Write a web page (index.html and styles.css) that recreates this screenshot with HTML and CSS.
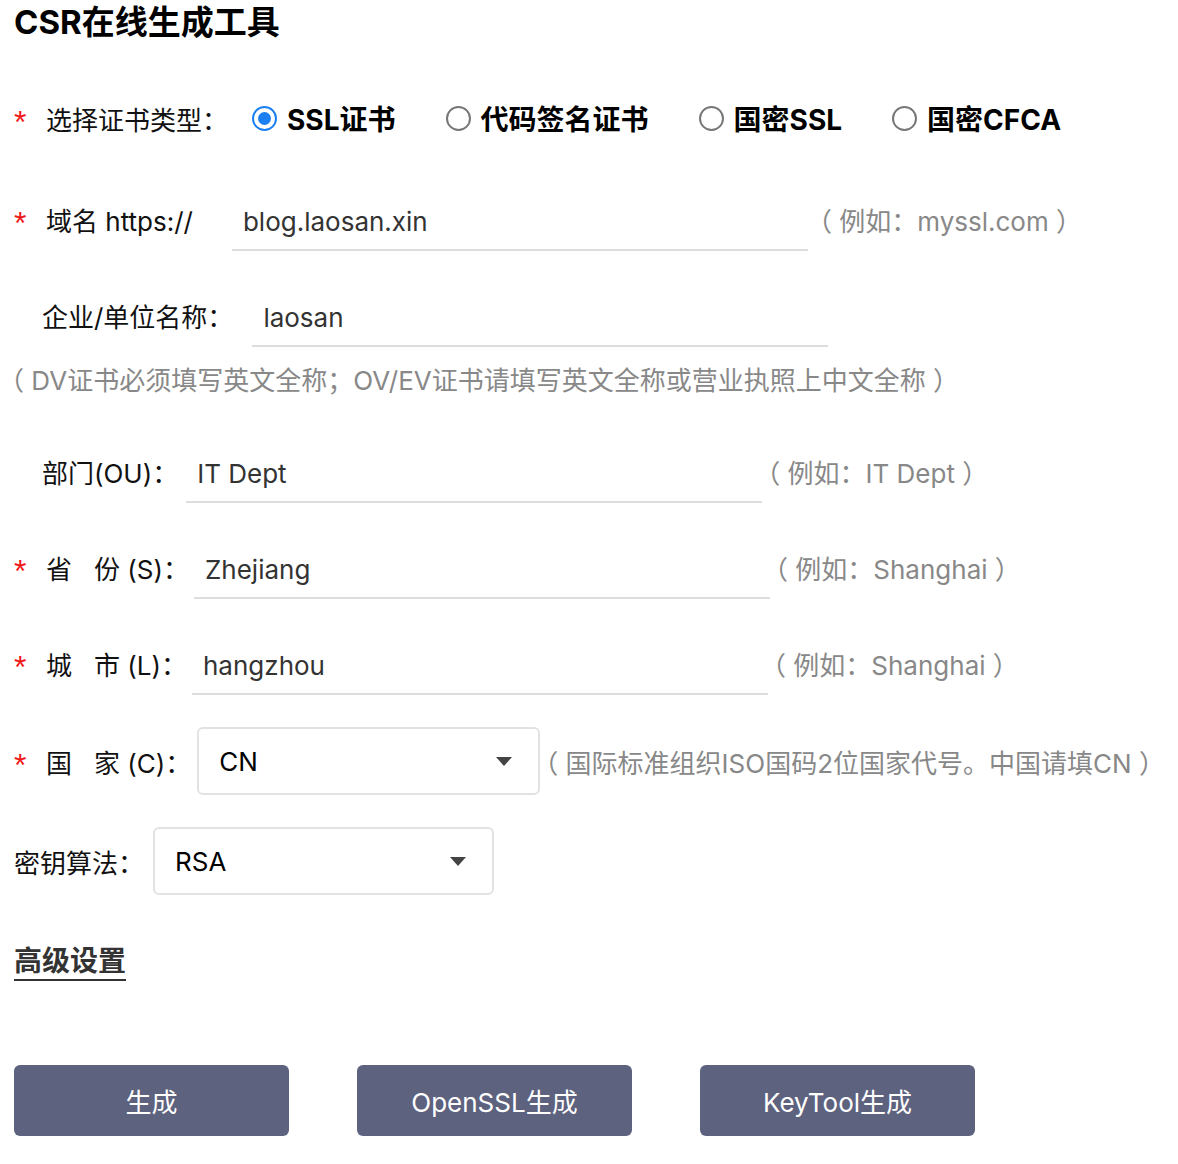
FILE: index.html
```html
<!DOCTYPE html>
<html lang="zh-CN">
<head>
  <meta charset="UTF-8" />
  <meta name="viewport" content="width=device-width, initial-scale=1.0"/>
  <title>CSR在线生成工具</title>
  <link rel="stylesheet" href="styles.css">
</head>
<body>
  <h1>CSR在线生成工具</h1>
  <form class="csr-form" onsubmit="return false">
    <div class="row row-type">
      <span class="star">*</span>
      <span class="label">选择证书类型：</span>
      <div class="radios">
        <label class="radio-item"><span class="radio checked"></span>SSL证书</label>
        <label class="radio-item"><span class="radio"></span>代码签名证书</label>
        <label class="radio-item"><span class="radio"></span>国密SSL</label>
        <label class="radio-item"><span class="radio"></span>国密CFCA</label>
      </div>
    </div>

    <div class="row row-domain">
      <span class="star">*</span>
      <span class="label">域名 https://</span>
      <input class="field" type="text" value="blog.laosan.xin">
      <span class="hint">（ 例如：myssl.com ）</span>
    </div>

    <div class="row row-org indent">
      <span class="label">企业/单位名称：</span>
      <input class="field" type="text" value="laosan">
    </div>
    <p class="hint note">（ DV证书必须填写英文全称；OV/EV证书请填写英文全称或营业执照上中文全称 ）</p>

    <div class="row row-ou indent">
      <span class="label">部门(OU)：</span>
      <input class="field" type="text" value="IT Dept">
      <span class="hint">（ 例如：IT Dept ）</span>
    </div>

    <div class="row row-st">
      <span class="star">*</span>
      <span class="label"><span class="wide">省</span>份 (S)：</span>
      <input class="field" type="text" value="Zhejiang">
      <span class="hint">（ 例如：Shanghai ）</span>
    </div>

    <div class="row row-l">
      <span class="star">*</span>
      <span class="label"><span class="wide">城</span>市 (L)：</span>
      <input class="field" type="text" value="hangzhou">
      <span class="hint">（ 例如：Shanghai ）</span>
    </div>

    <div class="row row-c">
      <span class="star">*</span>
      <span class="label"><span class="wide">国</span>家 (C)：</span>
      <div class="select select-country">
        <span>CN</span>
        <svg width="16" height="9" viewBox="0 0 16 9"><path d="M0 0h16L8 9z" fill="#444"/></svg>
      </div>
      <span class="hint">（ 国际标准组织ISO国码2位国家代号。中国请填CN ）</span>
    </div>

    <div class="row row-key">
      <span class="label">密钥算法：</span>
      <div class="select select-key">
        <span>RSA</span>
        <svg width="16" height="9" viewBox="0 0 16 9"><path d="M0 0h16L8 9z" fill="#444"/></svg>
      </div>
    </div>

    <a class="advanced" href="#">高级设置</a>

    <div class="buttons">
      <button class="btn">生成</button>
      <button class="btn">OpenSSL生成</button>
      <button class="btn">KeyTool生成</button>
    </div>
  </form>
</body>
</html>
```

FILE: styles.css
```css
body {
  margin: 0;
  padding: 0 14px;
  font-family: Inter, "Noto Sans CJK SC", sans-serif;
  color: #111;
  background: #fff;
}

h1 {
  margin: 0;
  font-size: 33px;
  line-height: 44px;
  font-weight: bold;
  color: #000;
}

.csr-form {
  margin-top: 42px;
}

.row {
  display: flex;
  align-items: center;
  height: 64px;
  margin-bottom: 32px;
  font-size: 26px;
}

.row.indent {
  padding-left: 28px;
}

.star {
  width: 32px;
  flex: none;
  color: #f01818;
  font-family: "Liberation Sans", sans-serif;
  font-size: 32px;
  line-height: 32px;
  position: relative;
  top: 4px;
}

.label {
  flex: none;
  white-space: nowrap;
  margin-right: 14px;
}

.label .wide {
  margin-right: 22px;
}

.row-type {
  margin-bottom: 37px;
}

.row-type .label {
  margin-right: 24px;
}

.radios {
  display: flex;
  gap: 50px;
}

.radio-item {
  display: flex;
  align-items: center;
  gap: 10px;
  font-size: 28px;
  font-weight: bold;
  color: #000;
}

.radio {
  width: 21px;
  height: 21px;
  border: 2px solid #777;
  border-radius: 50%;
  box-sizing: content-box;
  display: flex;
  align-items: center;
  justify-content: center;
}

.radio.checked {
  border-color: #1a7ff0;
}

.radio.checked::after {
  content: "";
  width: 13px;
  height: 13px;
  border-radius: 50%;
  background: #1a7ff0;
}

.field {
  width: 576px;
  height: 64px;
  box-sizing: border-box;
  border: none;
  border-bottom: 2px solid #ddd;
  padding: 6px 11px 0;
  font: inherit;
  font-size: 26px;
  color: #333;
  outline: none;
  flex: none;
}

.hint {
  color: #888;
  font-size: 26px;
  white-space: nowrap;
  margin-left: -8px;
}

.row-domain .hint {
  margin-left: -2px;
}

.note {
  margin: -15px 0 41px -16px;
  line-height: 34px;
}

.row-domain .label { margin-right: 39px; }
.row-org .label { margin-right: 19px; }
.row-ou .label { margin-right: 8px; }
.row-st .label,
.row-l .label { margin-right: 5px; }
.row-c .label { margin-right: 6px; }
.row-key .label { margin-right: 9px; }

.row-c {
  height: 68px;
}

.select {
  height: 68px;
  box-sizing: border-box;
  border: 2px solid #e2e2e2;
  border-radius: 6px;
  display: flex;
  align-items: center;
  justify-content: space-between;
  padding: 0 26px 0 20px;
  color: #000;
  flex: none;
}

.select-country {
  width: 343px;
}

.select-key {
  width: 341px;
}

.row-key {
  height: 68px;
  margin-bottom: 48px;
}

.advanced {
  display: inline-block;
  font-size: 28px;
  line-height: 36px;
  font-weight: bold;
  color: #333;
  text-decoration: none;
  border-bottom: 2px solid #333;
  padding-bottom: 0;
}

.buttons {
  display: flex;
  gap: 68px;
  margin-top: 84px;
}

.btn {
  width: 275px;
  height: 71px;
  border: none;
  border-radius: 6px;
  background: #5d627e;
  color: #fff;
  font: inherit;
  font-size: 26px;
  cursor: pointer;
}
```
